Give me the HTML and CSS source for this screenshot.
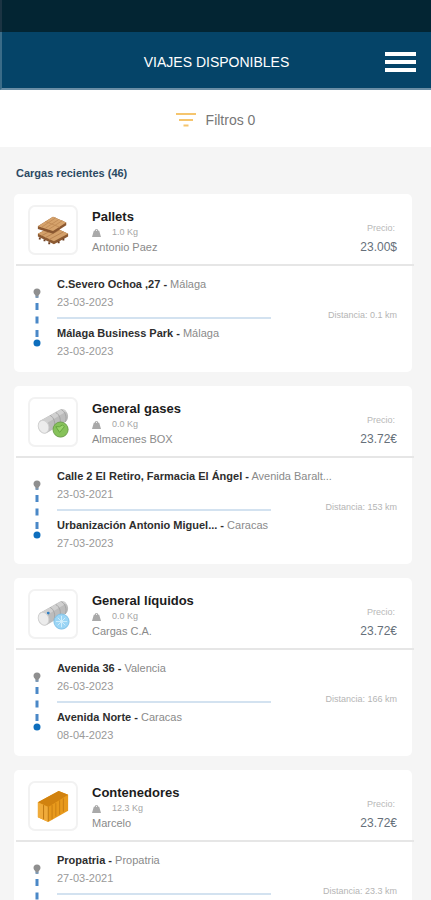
FILE: index.html
```html
<!DOCTYPE html>
<html lang="es">
<head>
  <meta charset="utf-8">
  <meta name="viewport" content="width=device-width, initial-scale=1">
  <title>Viajes disponibles</title>
  <link rel="stylesheet" href="styles.css">
</head>
<body>
  <svg class="defs" aria-hidden="true">
    <symbol id="weight" viewBox="0 0 10 10">
      <path d="M3 3a2 2 0 1 1 4 0h1l2 7H0l2-7z" fill="#a9a9a9"/>
      <circle cx="5" cy="2.6" r=".6" fill="#fff"/>
    </symbol>
    <symbol id="route" viewBox="0 0 10 60">
      <path d="M5 9v48" stroke="#4a88c7" stroke-width="3" stroke-dasharray="7 6.5" stroke-dashoffset="-7"/>
      <path d="M3.500 7h3v4h-3z" fill="#7d9bb8"/>
      <path d="M1.500 5a3.500 3.500 0 0 1 7 0c0 2-2 3-3.500 5C3.500 8 1.500 7 1.500 5z" fill="#8f8f8f"/>
      <circle cx="5" cy="56" r="3.500" fill="#0d6ebd"/>
    </symbol>
    <symbol id="tank" viewBox="0 0 36 36">
      <path d="M4 17 25 5c4-2 9 2 9 7 0 3-1 5-3 6L11 30z" fill="#bcbcbc"/>
      <path d="M6 16 26 5c3-1 5 0 6 2L10 20z" fill="#d0d0d0"/>
      <path d="M15 11c4 2 6 8 4 13M21 8c4 2 6 8 4 13M27 5c4 2 6 8 4 13" fill="none" stroke="#a3a3a3"/>
      <ellipse cx="8" cy="23" rx="5.500" ry="7" transform="rotate(-20 8 23)" fill="#ececec" stroke="#cfcfcf"/>
    </symbol>
  </svg>

  <div class="app">
    <div class="status-bar"></div>
    <header class="header">
      <h1>VIAJES DISPONIBLES</h1>
      <button class="menu" type="button" aria-label="Menú"><span></span><span></span><span></span></button>
    </header>
    <button class="filters" type="button">
      <svg width="20" height="14" viewBox="0 0 20 14" fill="none" stroke="#f5c56e" stroke-width="2">
        <path d="M0 1h20M3 7h14M7.500 12.500h5"/>
      </svg>
      <span>Filtros 0</span>
    </button>

    <main class="list">
      <h2>Cargas recientes (46)</h2>

      <article class="card">
        <div class="card-top">
          <div class="thumb">
            <svg viewBox="0 0 36 36">
              <path d="M2 22 17 14l17 8v3L19 33 2 25z" fill="#8c5a32"/>
              <path d="M2 22 17 14l17 8-15 8z" fill="#d3a06a"/>
              <path d="m6 24 15-8M10 26l15-8M14 28l15-8" stroke="#b98350"/>
              <path d="M4 26v2M9 28v2M14 31v2M24 30v2M29 27v2" stroke="#6d3e21" stroke-width="2"/>
              <path d="m2 14 16-10 14 6v3L18 22 2 17z" fill="#8a5730"/>
              <path d="M2 14 18 4l14 6-14 9z" fill="#d6a36c"/>
              <path d="m6 15 15-10M10 16 24 7M14 17l14-9M10 9l15 6" stroke="#c18c57"/>
            </svg>
          </div>
          <div class="info">
            <h3>Pallets</h3>
            <p class="kg"><svg><use href="#weight"/></svg>1.0 Kg</p>
            <p class="owner">Antonio Paez</p>
          </div>
          <div class="price"><small>Precio:</small><span>23.00$</span></div>
        </div>
        <div class="card-route">
          <svg class="route"><use href="#route"/></svg>
          <div class="stops">
            <p class="stop"><b>C.Severo Ochoa ,27 -</b> Málaga</p>
            <p class="date">23-03-2023</p>
            <div class="mid"><hr><span>Distancia: 0.1 km</span></div>
            <p class="stop"><b>Málaga Business Park -</b> Málaga</p>
            <p class="date">23-03-2023</p>
          </div>
        </div>
      </article>

      <article class="card">
        <div class="card-top">
          <div class="thumb">
            <svg viewBox="0 0 36 36">
              <use href="#tank"/>
              <circle cx="26" cy="26" r="8" fill="#86c25a" stroke="#6b9c4b"/>
              <path d="m21 23 4 6 5-6-2-2-3 2z" fill="#9ad46c" stroke="#64a33e"/>
            </svg>
          </div>
          <div class="info">
            <h3>General gases</h3>
            <p class="kg"><svg><use href="#weight"/></svg>0.0 Kg</p>
            <p class="owner">Almacenes BOX</p>
          </div>
          <div class="price"><small>Precio:</small><span>23.72€</span></div>
        </div>
        <div class="card-route">
          <svg class="route"><use href="#route"/></svg>
          <div class="stops">
            <p class="stop"><b>Calle 2 El Retiro, Farmacia El Ángel -</b> Avenida Baralt...</p>
            <p class="date">23-03-2021</p>
            <div class="mid"><hr><span>Distancia: 153 km</span></div>
            <p class="stop"><b>Urbanización Antonio Miguel... -</b> Caracas</p>
            <p class="date">27-03-2023</p>
          </div>
        </div>
      </article>

      <article class="card">
        <div class="card-top">
          <div class="thumb">
            <svg viewBox="0 0 36 36">
              <use href="#tank"/>
              <circle cx="13" cy="17" r="1.500" fill="#2e7fc4"/>
              <circle cx="27" cy="26" r="8" fill="#9ad5f5" stroke="#7fc0e6"/>
              <path d="M27 20v12M21 26h12M23 22l8 8M31 22l-8 8" stroke="#d3effc"/>
            </svg>
          </div>
          <div class="info">
            <h3>General líquidos</h3>
            <p class="kg"><svg><use href="#weight"/></svg>0.0 Kg</p>
            <p class="owner">Cargas C.A.</p>
          </div>
          <div class="price"><small>Precio:</small><span>23.72€</span></div>
        </div>
        <div class="card-route">
          <svg class="route"><use href="#route"/></svg>
          <div class="stops">
            <p class="stop"><b>Avenida 36 -</b> Valencia</p>
            <p class="date">26-03-2023</p>
            <div class="mid"><hr><span>Distancia: 166 km</span></div>
            <p class="stop"><b>Avenida Norte -</b> Caracas</p>
            <p class="date">08-04-2023</p>
          </div>
        </div>
      </article>

      <article class="card">
        <div class="card-top">
          <div class="thumb">
            <svg viewBox="0 0 36 36">
              <path d="M2 14 24 2l10 4v17L13 35 2 30z" fill="#e89a1c"/>
              <path d="M2 14 24 2l10 4-21 13z" fill="#d1820f"/>
              <path d="m2 14 11 5v16L2 30z" fill="#f0ab3a"/>
              <path d="M17 17v15M21 15v14M25 12v15M29 10v14" stroke="#c87d12"/>
              <path d="M8 17v15M13 19v15" stroke="#bd7610"/>
            </svg>
          </div>
          <div class="info">
            <h3>Contenedores</h3>
            <p class="kg"><svg><use href="#weight"/></svg>12.3 Kg</p>
            <p class="owner">Marcelo</p>
          </div>
          <div class="price"><small>Precio:</small><span>23.72€</span></div>
        </div>
        <div class="card-route">
          <svg class="route"><use href="#route"/></svg>
          <div class="stops">
            <p class="stop"><b>Propatria -</b> Propatria</p>
            <p class="date">27-03-2021</p>
            <div class="mid"><hr><span>Distancia: 23.3 km</span></div>
          </div>
        </div>
      </article>
    </main>
  </div>
</body>
</html>
```

FILE: styles.css
```css
* {
  box-sizing: border-box;
}
body {
  margin: 0;
  background: #f5f5f5;
  font-family: "Liberation Sans", Arial, sans-serif;
  font-size: 11px;
  color: #8a8a8a;
}
h1, h2, h3, p {
  margin: 0;
}
button {
  border: 0;
  padding: 0;
  font: inherit;
  cursor: pointer;
}
.defs {
  display: none;
}
.app {
  display: flex;
  flex-direction: column;
  height: 100vh;
  overflow: hidden;
}

/* top bars */
.status-bar {
  flex: none;
  height: 32px;
  background: #032533;
  border-left: 2px solid #1b3443;
}
.header {
  flex: none;
  display: grid;
  grid-template-columns: 1fr auto 1fr;
  align-items: center;
  height: 58px;
  padding: 4px 15px 0;
  background: #054468;
  border-left: 2px solid #3b6c88;
  border-bottom: 2px solid #6b8ea5;
}
.header h1 {
  grid-column: 2;
  font-size: 14px;
  font-weight: normal;
  color: #fff;
}
.menu {
  justify-self: end;
  display: flex;
  flex-direction: column;
  gap: 4px;
  width: 31px;
  background: none;
}
.menu span {
  height: 4px;
  background: #fff;
}
.filters {
  flex: none;
  display: flex;
  justify-content: center;
  align-items: center;
  gap: 10px;
  height: 57px;
  padding-top: 2px;
  background: #fff;
  font-size: 14px;
  color: #777;
}

/* cards */
.list {
  flex: 1;
  display: flex;
  flex-direction: column;
  gap: 14px;
  min-height: 0;
  padding: 19px 19px 0 14px;
  overflow: hidden;
}
.list h2 {
  padding-left: 2px;
  font-size: 11px;
  line-height: 14px;
  color: #2c4a63;
}
.card {
  flex: none;
  background: #fff;
  border-radius: 5px;
}
.card-top {
  display: flex;
  align-items: center;
  gap: 14px;
  height: 72px;
  padding: 2px 17px 0 14px;
  margin: 0 -2px 0 2px;
  border-bottom: 2px solid #e6e6e6;
}
.thumb {
  display: grid;
  place-items: center;
  width: 50px;
  height: 50px;
  margin-left: -2px;
  border: 2px solid #f2f2f2;
  border-radius: 7px;
}
.thumb svg {
  width: 34px;
  height: 34px;
}
.info {
  flex: 1;
  padding-top: 4px;
}
.info h3 {
  font-size: 13px;
  line-height: 16px;
  color: #1c1c1c;
}
.kg {
  display: flex;
  align-items: center;
  gap: 11px;
  font-size: 9px;
  line-height: 15px;
  color: #a5a5a5;
}
.kg svg {
  width: 9px;
  height: 9px;
}
.owner {
  line-height: 15px;
}
.price {
  display: flex;
  flex-direction: column;
  align-items: flex-end;
  gap: 5px;
  padding-top: 15px;
  font-size: 12px;
  line-height: 14px;
  color: #66707a;
}
.price small {
  padding-right: 2px;
  font-size: 9px;
  color: #b8b8b8;
}
.card-route {
  display: flex;
  gap: 15px;
  height: 106px;
  padding: 9px 15px 0 18px;
}
.route {
  flex: none;
  width: 10px;
  height: 60px;
  margin-top: 12px;
}
.stops {
  flex: 1;
}
.stop {
  line-height: 18px;
  white-space: nowrap;
  color: #8a8a8a;
}
.stop b {
  color: #2e2e2e;
}
.date {
  line-height: 18px;
  color: #999;
}
.mid {
  display: flex;
  align-items: center;
  justify-content: space-between;
  height: 13px;
  font-size: 9px;
  line-height: 8px;
  color: #b5b5b5;
}
.mid span {
  align-self: flex-start;
}
.mid hr {
  width: 63%;
  height: 2px;
  margin: 0;
  border: 0;
  background: #d3e2f0;
}
```
